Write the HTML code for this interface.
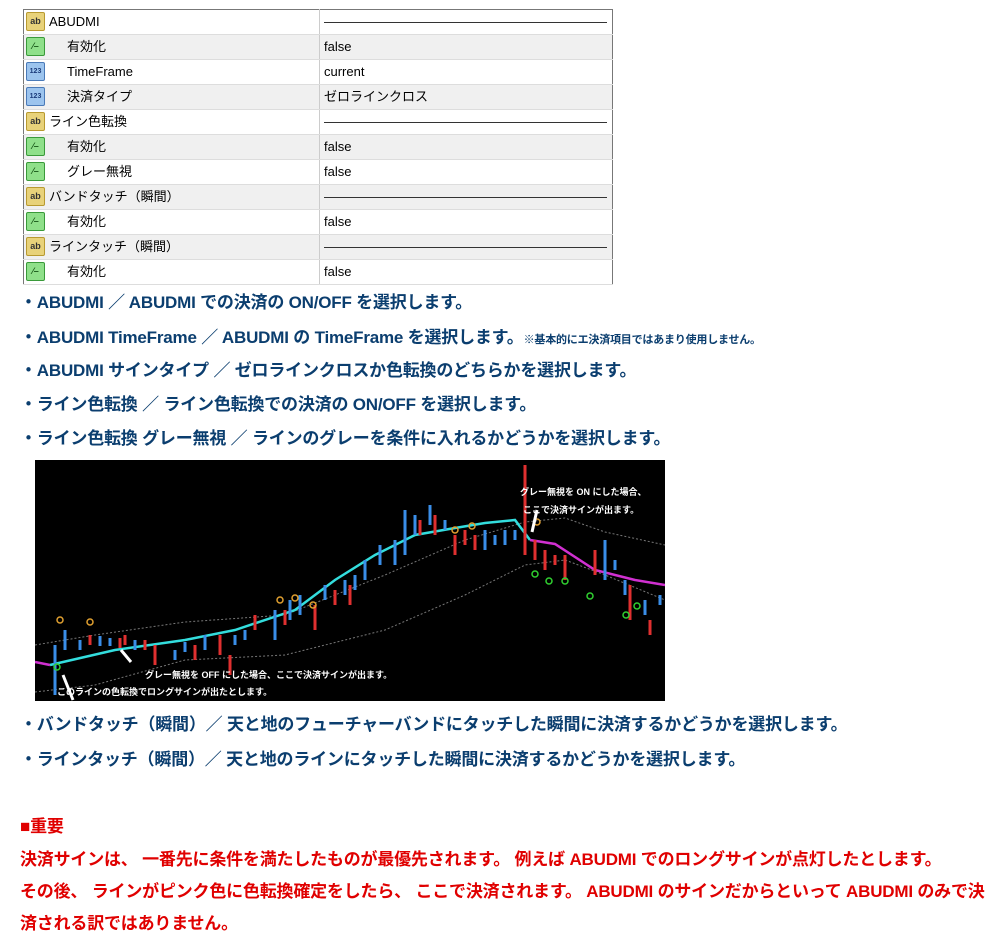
<!DOCTYPE html>
<html><head><meta charset="utf-8"><style>
body{margin:0;width:1000px;height:949px;background:#fff;position:relative;overflow:hidden;font-family:"Liberation Sans","Noto Sans CJK JP",sans-serif}
table{position:absolute;left:23px;top:9px;border-collapse:collapse;width:590px;font-size:13px;color:#000;border:1px solid #777}
td{height:24px;padding:0;border-bottom:1px solid #ddd;vertical-align:middle;line-height:24px;white-space:nowrap}
tr:nth-child(even) td{background:#f0f0f0}
td.a{width:295px;border-right:1px solid #ccc}
td.b{padding-left:4px}
.ic{display:inline-block;vertical-align:middle;margin:-3px 4px 0 2px;border-radius:2px;font-size:9px;font-weight:bold;text-align:center;width:17px;height:17px;line-height:17px}
.ab{background:#e8d27a;border:1px solid #b89a30;color:#333}
.bo{background:#8fe08a;border:1px solid #3a9a3a;color:#1a5a1a}
.n{background:#9cc4ee;border:1px solid #4a7ab8;color:#1a3a7a;font-size:7px}
.ind{padding-left:18px}
.dash{display:inline-block;width:283px;border-top:1px solid #333;vertical-align:middle}
.t{position:absolute;left:20px;font-weight:bold;font-size:17px;color:#0b3e6f;white-space:nowrap;font-family:"Liberation Sans Narrow","Liberation Sans","Noto Sans CJK JP",sans-serif;letter-spacing:-0.2px}
.r{color:#e00000}
small{font-size:11px}
</style></head><body>
<table>
<tr><td class="a"><span class="ic ab">ab</span>ABUDMI</td><td class="b"><span class="dash"></span></td></tr>
<tr><td class="a"><span class="ic bo">⁄–</span><span class="ind">有効化</span></td><td class="b">false</td></tr>
<tr><td class="a"><span class="ic n">123</span><span class="ind">TimeFrame</span></td><td class="b">current</td></tr>
<tr><td class="a"><span class="ic n">123</span><span class="ind">決済タイプ</span></td><td class="b">ゼロラインクロス</td></tr>
<tr><td class="a"><span class="ic ab">ab</span>ライン色転換</td><td class="b"><span class="dash"></span></td></tr>
<tr><td class="a"><span class="ic bo">⁄–</span><span class="ind">有効化</span></td><td class="b">false</td></tr>
<tr><td class="a"><span class="ic bo">⁄–</span><span class="ind">グレー無視</span></td><td class="b">false</td></tr>
<tr><td class="a"><span class="ic ab">ab</span>バンドタッチ（瞬間）</td><td class="b"><span class="dash"></span></td></tr>
<tr><td class="a"><span class="ic bo">⁄–</span><span class="ind">有効化</span></td><td class="b">false</td></tr>
<tr><td class="a"><span class="ic ab">ab</span>ラインタッチ（瞬間）</td><td class="b"><span class="dash"></span></td></tr>
<tr><td class="a"><span class="ic bo">⁄–</span><span class="ind">有効化</span></td><td class="b">false</td></tr>
</table>
<div class="t" style="top:288px">・ABUDMI ／ ABUDMI での決済の ON/OFF を選択します。</div>
<div class="t" style="top:323px">・ABUDMI TimeFrame ／ ABUDMI の TimeFrame を選択します。<small>※基本的にエ決済項目ではあまり使用しません。</small></div>
<div class="t" style="top:356px">・ABUDMI サインタイプ ／ ゼロラインクロスか色転換のどちらかを選択します。</div>
<div class="t" style="top:390px">・ライン色転換 ／ ライン色転換での決済の ON/OFF を選択します。</div>
<div class="t" style="top:424px">・ライン色転換 グレー無視 ／ ラインのグレーを条件に入れるかどうかを選択します。</div>
<svg style="position:absolute;left:35px;top:460px" width="630" height="241" viewBox="0 0 630 241">
<rect width="630" height="241" fill="#000"/>
<polyline fill="none" stroke="#777" stroke-dasharray="2,2" points="0,185 60,175 150,162 250,155 350,115 430,80 490,62 530,58 570,72 630,85"/>
<polyline fill="none" stroke="#777" stroke-dasharray="2,2" points="0,232 60,225 150,200 250,195 350,170 430,135 490,105 530,100 570,115 630,140"/>
<polyline fill="none" stroke="#d030d0" stroke-width="2.5" points="0,202 15,205"/>
<polyline fill="none" stroke="#33dddd" stroke-width="2.5" points="15,205 80,190 150,180 200,170 260,150 300,120 340,95 380,75 420,68 450,63 480,60 495,80"/>
<polyline fill="none" stroke="#d030d0" stroke-width="2.5" points="495,80 520,84 560,110 600,120 630,125"/>
<g stroke-width="3">
<path stroke="#3a8ee8" d="M20,185v50M30,170v20M45,180v10M65,176v10M75,178v8M100,180v10M140,190v10M150,182v10M170,175v15M200,175v10M210,170v10M240,150v30M255,140v20M265,135v20M290,125v15M310,120v15M320,115v15M330,100v20M345,85v20M360,80v25M370,50v45M380,55v20M395,45v20M410,60v10M450,70v20M460,75v10M470,70v15M480,70v10M570,80v40M580,100v10M590,120v15M610,140v15M625,135v10"/>
<path stroke="#e03030" d="M55,175v10M85,178v10M90,175v10M110,180v10M120,185v20M160,185v15M185,175v20M195,195v20M220,155v15M250,150v15M280,145v25M300,130v15M315,125v20M385,60v15M400,55v20M420,75v20M430,70v15M440,75v15M490,5v90M500,80v20M510,90v20M520,95v10M530,95v25M560,90v25M595,125v35M615,160v15"/>
</g>
<g fill="none" stroke="#e0a030" stroke-width="1.5"><circle cx="25" cy="160" r="3"/><circle cx="55" cy="162" r="3"/><circle cx="245" cy="140" r="3"/><circle cx="260" cy="138" r="3"/><circle cx="278" cy="145" r="3"/><circle cx="420" cy="70" r="3"/><circle cx="437" cy="66" r="3"/><circle cx="502" cy="62" r="3"/></g>
<g fill="none" stroke="#30d030" stroke-width="1.5"><circle cx="22" cy="207" r="3"/><circle cx="500" cy="114" r="3"/><circle cx="514" cy="121" r="3"/><circle cx="530" cy="121" r="3"/><circle cx="555" cy="136" r="3"/><circle cx="591" cy="155" r="3"/><circle cx="602" cy="146" r="3"/></g>
<g stroke="#fff" stroke-width="3"><path d="M28,215l10,25M86,190l10,12M502,50l-5,22"/></g>
<g fill="#fff" font-size="9" font-weight="bold" font-family="Liberation Sans,Noto Sans CJK JP,sans-serif">
<text x="485" y="35">グレー無視を ON にした場合、</text>
<text x="488" y="53">ここで決済サインが出ます。</text>
<text x="110" y="218">グレー無視を OFF にした場合、ここで決済サインが出ます。</text>
<text x="22" y="235">このラインの色転換でロングサインが出たとします。</text>
</g>
</svg>
<div class="t" style="top:710px">・バンドタッチ（瞬間）／ 天と地のフューチャーバンドにタッチした瞬間に決済するかどうかを選択します。</div>
<div class="t" style="top:745px">・ラインタッチ（瞬間）／ 天と地のラインにタッチした瞬間に決済するかどうかを選択します。</div>
<div class="t r" style="top:812px">■重要</div>
<div class="t r" style="top:845px">決済サインは、 一番先に条件を満たしたものが最優先されます。 例えば ABUDMI でのロングサインが点灯したとします。</div>
<div class="t r" style="top:877px">その後、 ラインがピンク色に色転換確定をしたら、 ここで決済されます。 ABUDMI のサインだからといって ABUDMI のみで決</div>
<div class="t r" style="top:909px">済される訳ではありません。</div>
</body></html>
